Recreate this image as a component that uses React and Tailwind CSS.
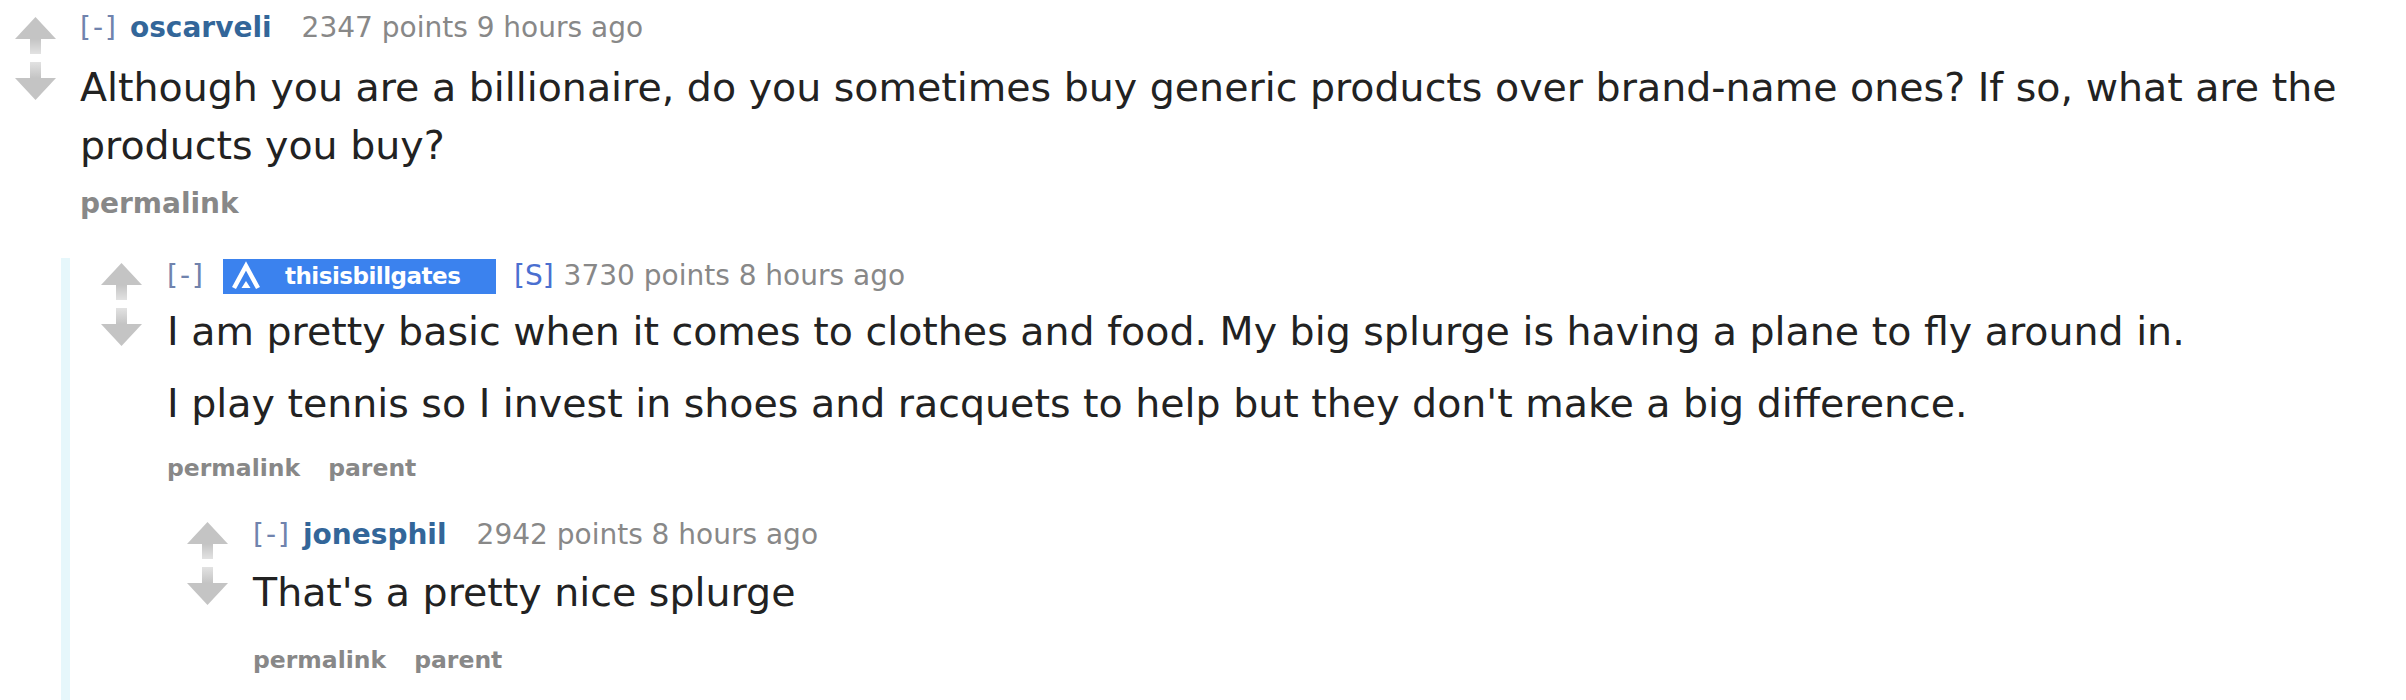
const ArrowUp = () => (
    <svg width="41" height="37" viewBox="0 0 41 37">
        <defs>
            <linearGradient id="su" x1="0" y1="0" x2="0" y2="1">
                <stop offset="0" stopColor="#c4c4c4" />
                <stop offset="1" stopColor="#e2e2e2" />
            </linearGradient>
        </defs>
        <polygon points="20.5,0 41,22 0,22" fill="#c4c4c4" />
        <rect x="15" y="22" width="11" height="15" fill="url(#su)" />
    </svg>
);

const ArrowDown = () => (
    <svg width="41" height="38" viewBox="0 0 41 38">
        <defs>
            <linearGradient id="sd" x1="0" y1="0" x2="0" y2="1">
                <stop offset="0" stopColor="#e2e2e2" />
                <stop offset="1" stopColor="#c4c4c4" />
            </linearGradient>
        </defs>
        <rect x="15" y="0" width="11" height="16" fill="url(#sd)" />
        <polygon points="0,16 41,16 20.5,38" fill="#c4c4c4" />
    </svg>
);

const AmaIcon = () => (
    <svg width="30" height="30" viewBox="0 0 30 30">
        <polyline points="3,27 15,5 27,27" fill="none" stroke="#fff" strokeWidth="4.5" strokeLinejoin="miter" />
        <polygon points="10.5,27 15,20 19.5,27" fill="#fff" />
    </svg>
);

const Votes = ({ top }) => (
    <div className={`flex flex-col gap-[8px] w-[41px] shrink-0 ${top}`}>
        <ArrowUp />
        <ArrowDown />
    </div>
);

const Expand = () => <span className="text-[#7083ad] tracking-[2px]">[-]</span>;

export default function App() {
    return (
        <div className="bg-white w-[2406px] h-[700px] overflow-hidden font-['DejaVu_Sans',Verdana,sans-serif] pr-[30px]">
            {/* top level comment */}
            <div className="flex pl-[15px] pt-[10px]">
                <Votes top="mt-[7px]" />
                <div className="ml-[24px]">
                    <div className="text-[28px] leading-[36px] text-[#888]">
                        <Expand />
                        <span className="ml-[12px] font-bold text-[#336699]">oscarveli</span>
                        <span className="ml-[30px]">2347 points 9 hours ago</span>
                    </div>
                    <p className="mt-[12px] text-[39.5px] leading-[58px] text-[#222]">
                        Although you are a billionaire, do you sometimes buy generic products over brand-name ones? If so, what are the products you buy?
                    </p>
                    <div className="mt-[12px] text-[28px] leading-[36px] font-bold text-[#888]">permalink</div>
                </div>
            </div>

            {/* replies */}
            <div className="ml-[61px] mt-[36px] border-l-[9px] border-[#e6f7fb] pl-[31px] pb-[40px]">
                <div className="flex">
                    <Votes top="mt-[5px]" />
                    <div className="ml-[25px]">
                        <div className="flex items-center text-[28px] leading-[36px] text-[#888]">
                            <Expand />
                            <span className="ml-[18px] flex items-center gap-[24px] h-[35px] w-[273px] px-[8px] bg-[#3b82ee] text-white font-bold text-[23px] tracking-[-0.5px]">
                                <AmaIcon />
                                thisisbillgates
                            </span>
                            <span className="ml-[18px] text-[#4a6fd0]">[S]</span>
                            <span className="ml-[10px]">3730 points 8 hours ago</span>
                        </div>
                        <p className="mt-[8px] text-[39.5px] leading-[58px] text-[#222]">
                            I am pretty basic when it comes to clothes and food. My big splurge is having a plane to fly around in.
                        </p>
                        <p className="mt-[14px] text-[39.5px] leading-[58px] text-[#222]">
                            I play tennis so I invest in shoes and racquets to help but they don't make a big difference.
                        </p>
                        <div className="mt-[20px] flex gap-[28px] text-[23.5px] leading-[32px] font-semibold text-[#888]">
                            <span>permalink</span>
                            <span>parent</span>
                        </div>
                    </div>
                </div>

                <div className="ml-[46px] mt-[33px] border-l-[9px] border-transparent pl-[31px]">
                    <div className="flex">
                        <Votes top="mt-[5px]" />
                        <div className="ml-[25px]">
                            <div className="text-[28px] leading-[36px] text-[#888]">
                                <Expand />
                                <span className="ml-[12px] font-bold text-[#336699]">jonesphil</span>
                                <span className="ml-[30px]">2942 points 8 hours ago</span>
                            </div>
                            <p className="mt-[10px] text-[39.5px] leading-[58px] text-[#222]">That's a pretty nice splurge</p>
                            <div className="mt-[23px] flex gap-[28px] text-[23.5px] leading-[32px] font-semibold text-[#888]">
                                <span>permalink</span>
                                <span>parent</span>
                            </div>
                        </div>
                    </div>
                </div>
            </div>
        </div>
    );
}
